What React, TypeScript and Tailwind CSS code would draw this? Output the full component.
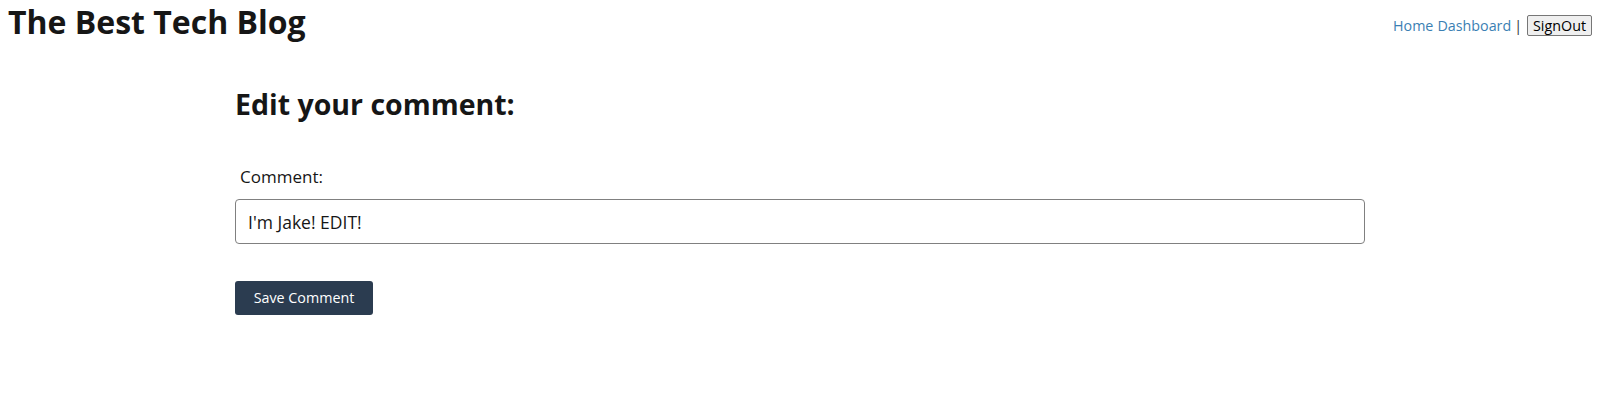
import React from "react";

export default function App() {
  return (
    <div className="min-h-[414px] bg-white text-[#161616]" style={{ fontFamily: '"Open Sans", "Noto Sans", sans-serif' }}>
      <header className="flex items-start justify-between">
        <h1 className="ml-2 mt-[1px] text-[32px] font-bold leading-[42px]">The Best Tech Blog</h1>
        <nav className="mr-[8px] mt-[15px] flex items-center text-[14.3px] leading-[20px]">
          <a href="#" className="text-[#3b7fb3]">Home</a>
          <a href="#" className="ml-[4px] text-[#3b7fb3]">Dashboard</a>
          <span className="ml-[3px] text-[#333]">|</span>
          <button className="ml-[5px] h-[21px] rounded-[2px] border border-[#767676] bg-[#efefef] px-[5px] text-[14.3px] leading-[18px] text-black">SignOut</button>
        </nav>
      </header>
      <main className="mx-auto mt-[42px] w-[1130px]">
        <h2 className="text-[28.5px] font-bold leading-[38px]">Edit your comment:</h2>
        <form className="mt-[42px]">
          <label className="ml-[5px] block text-[17px] leading-[24px]">Comment:</label>
          <input
            defaultValue="I'm Jake! EDIT!"
            className="mt-[10px] block h-[45px] w-full rounded-[4px] border border-[#808080] px-[12px] text-[17.5px] text-[#161616] outline-none"
          />
          <button type="button" className="mt-[37px] h-[34px] w-[138px] rounded-[3px] bg-[#2b3c50] text-[14.3px] text-white">Save Comment</button>
        </form>
      </main>
    </div>
  );
}
